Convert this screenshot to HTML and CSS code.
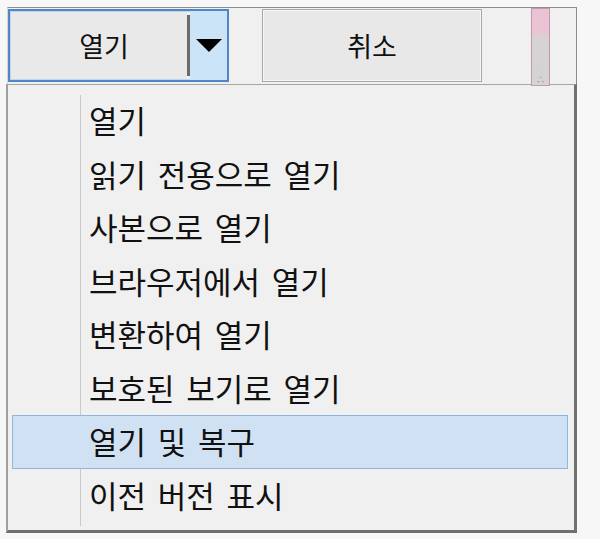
FILE: index.html
```html
<!DOCTYPE html>
<html lang="ko">
<head>
  <meta charset="UTF-8">
  <meta name="viewport" content="width=device-width, initial-scale=1">
  <title>열기</title>
  <link rel="stylesheet" href="styles.css">
</head>
<body>

  <div class="window">
    <div class="toolbar">
      <div class="split">
        <div class="split-main">열기</div>
        <div class="split-sep"></div>
        <div class="split-arrow"><span class="caret"></span></div>
      </div>
      <div class="btn">취소</div>
      <div class="thumb"><span class="grip">∴</span></div>
    </div>

    <ul class="menu">
      <li>열기</li>
      <li>읽기 전용으로 열기</li>
      <li>사본으로 열기</li>
      <li>브라우저에서 열기</li>
      <li>변환하여 열기</li>
      <li>보호된 보기로 열기</li>
      <li class="hover">열기 및 복구</li>
      <li>이전 버전 표시</li>
    </ul>
  </div>

</body>
</html>
```

FILE: styles.css
```css
body {
  margin: 0;
  background: #f7f7f7;
  font-family: "Noto Sans CJK KR", "Noto Sans", sans-serif;
  color: #111;
}
.window {
  margin: 7px 0 0 7px;
  width: 570px;
}
.toolbar {
  display: flex;
  align-items: flex-start;
  height: 77px;
  box-sizing: border-box;
  padding-top: 1px;
  background: #f0f0f0;
  border-top: 1px solid #8c8c8c;
  border-right: 1px solid #8c8c8c;
  border-left: 1px solid #d6d6d6;
}
.split {
  display: flex;
  width: 221px;
  height: 73px;
  box-sizing: border-box;
  border: 2px solid #4f86c6;
  box-shadow: inset 0 0 0 1px #bcd6f1;
}
.split-main {
  flex: 1;
  display: flex;
  justify-content: center;
  align-items: center;
  padding-left: 10px;
  margin: 1px 0 1px 1px;
  background: #e9e9e9;
  font-size: 27px;
}
.split-sep {
  width: 3px;
  margin: 4px 0;
  background: #6b6b6b;
}
.split-arrow {
  width: 37px;
  display: flex;
  justify-content: center;
  align-items: center;
  background: #cce4f7;
}
.caret {
  width: 0;
  height: 0;
  border-left: 13px solid transparent;
  border-right: 13px solid transparent;
  border-top: 13px solid #000;
}
.btn {
  width: 220px;
  height: 73px;
  margin-left: 33px;
  box-sizing: border-box;
  display: flex;
  justify-content: center;
  align-items: center;
  border: 1px solid #a9a9a9;
  box-shadow: inset 0 0 0 1px #f6f6f6;
  background: #e8e8e8;
  font-size: 27px;
}
.thumb {
  position: relative;
  z-index: 1;
  width: 19px;
  height: 78px;
  margin: -1px 0 0 49px;
  box-sizing: border-box;
  border: 1px solid #c796ad;
  background: linear-gradient(#eac3d4 0, #eac3d4 22px, #d6d3d4 30px, #d4d4d4 100%);
  display: flex;
  justify-content: center;
  align-items: flex-end;
}
.grip {
  font-size: 9px;
  line-height: 10px;
  color: #9a7f8b;
}
.menu {
  list-style: none;
  margin: 0 0 0 -1px;
  width: 571px;
  height: 449px;
  box-sizing: border-box;
  padding: 9px 6px 0 4px;
  background: #f0f0f0 linear-gradient(#c9c9c9, #c9c9c9) no-repeat 72px 10px / 1px calc(100% - 14px);
  border-top: 1px solid #a6a6a6;
  border-left: 2px solid #a0a0a0;
  border-right: 3px solid #707070;
  border-bottom: 3px solid #707070;
}
.menu li {
  height: 53.5px;
  line-height: 50px;
  box-sizing: border-box;
  border: 1px solid transparent;
  padding-left: 76px;
  font-size: 31px;
  word-spacing: 3px;
}
.menu li.hover {
  background: #cfe1f3;
  border-color: #90b6dd;
}
```
